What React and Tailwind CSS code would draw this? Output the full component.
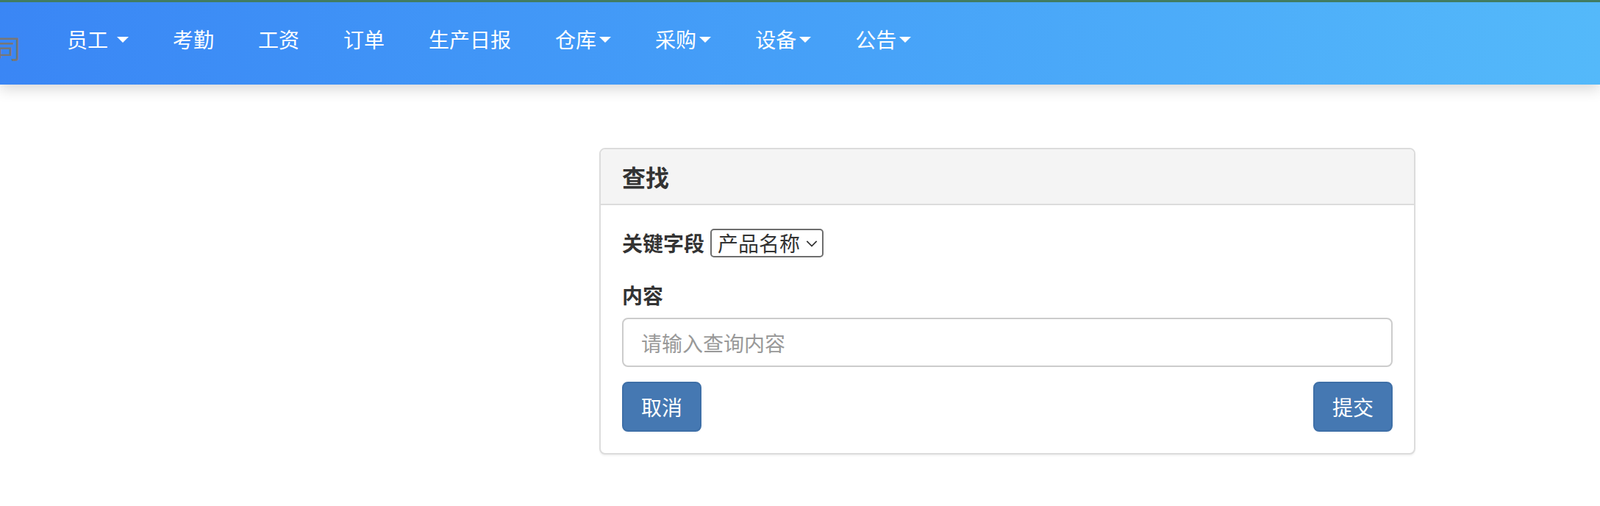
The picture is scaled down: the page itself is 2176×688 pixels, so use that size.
import React from 'react'

const NAV_ITEMS = [
  { label: '员工', caret: true, spaced: true },
  { label: '考勤' },
  { label: '工资' },
  { label: '订单' },
  { label: '生产日报' },
  { label: '仓库', caret: true },
  { label: '采购', caret: true },
  { label: '设备', caret: true },
  { label: '公告', caret: true },
]

function Caret({ spaced }) {
  return (
    <span
      className={`inline-block w-0 h-0 border-t-[8px] border-t-white border-x-[8px] border-x-transparent mt-[2px] ${spaced ? 'ml-[12px]' : 'ml-[4px]'}`}
    />
  )
}

function NavBar() {
  return (
    <nav className="relative z-10 h-[115px] border-t-[3px] border-[#417c62] bg-linear-to-r from-[#3a86f5] to-[#54b9fa] shadow-[0_6px_18px_rgba(0,0,0,0.16)] flex items-start overflow-hidden">
      {/* brand, pushed off the left edge */}
      <span className="ml-[-7px] mt-[41px] text-[36px] leading-[40px] text-[#777] whitespace-nowrap">司</span>

      <ul className="flex ml-[32px] mt-[30px]">
        {NAV_ITEMS.map(item => (
          <li
            key={item.label}
            className="flex items-center px-[30px] h-[40px] text-[28px] leading-[40px] text-white whitespace-nowrap"
          >
            {item.label}
            {item.caret && <Caret spaced={item.spaced} />}
          </li>
        ))}
      </ul>
    </nav>
  )
}

function FakeSelect({ value }) {
  return (
    <div className="flex items-center h-[39px] w-[154px] border-2 border-[#6e6e6e] rounded-[5px] pl-[8px] pr-[6px]">
      <span className="text-[28px] leading-[36px] text-[#333] font-normal whitespace-nowrap">{value}</span>
      <svg className="ml-[8px] mt-[2px]" width="18" height="11" viewBox="0 0 18 11" fill="none">
        <path d="M1.5 1.5 L9 9 L16.5 1.5" stroke="#333" strokeWidth="2" />
      </svg>
    </div>
  )
}

function Button({ children }) {
  return (
    <button className="h-[68px] px-[24px] border-2 border-[#3e6fa7] bg-[#4578b2] rounded-[8px] text-[28px] leading-[40px] text-white">
      {children}
    </button>
  )
}

function SearchPanel() {
  return (
    <div className="ml-[815px] mt-[86px] w-[1110px] border-2 border-[#dcdcdc] rounded-[8px] bg-white shadow-[0_2px_2px_rgba(0,0,0,0.05)]">
      {/* Header */}
      <div className="bg-[#f4f4f4] border-b-2 border-[#dcdcdc] rounded-t-[6px] px-[29px] py-[20px]">
        <h3 className="text-[32px] leading-[34px] font-semibold text-[#333]">查找</h3>
      </div>

      {/* Body */}
      <div className="px-[29px] pt-[31px] pb-[29px]">
        <div className="flex items-center gap-[8px] h-[40px]">
          <label className="text-[28px] leading-[40px] font-bold text-[#333]">关键字段</label>
          <FakeSelect value="产品名称" />
        </div>

        <label className="block mt-[31px] h-[40px] text-[28px] leading-[40px] font-bold text-[#333]">内容</label>
        <input
          className="block mt-[11px] w-full h-[67px] border-2 border-[#cccccc] rounded-[8px] px-[24px] text-[28px] text-[#555] placeholder:text-[#999] outline-none"
          placeholder="请输入查询内容"
        />

        <div className="flex justify-between mt-[20px]">
          <Button>取消</Button>
          <Button>提交</Button>
        </div>
      </div>
    </div>
  )
}

export default function App() {
  return (
    <div className="min-h-screen bg-white font-['Noto_Sans_CJK_SC','Noto_Sans',sans-serif] text-[#333]">
      <NavBar />
      <SearchPanel />
    </div>
  )
}
